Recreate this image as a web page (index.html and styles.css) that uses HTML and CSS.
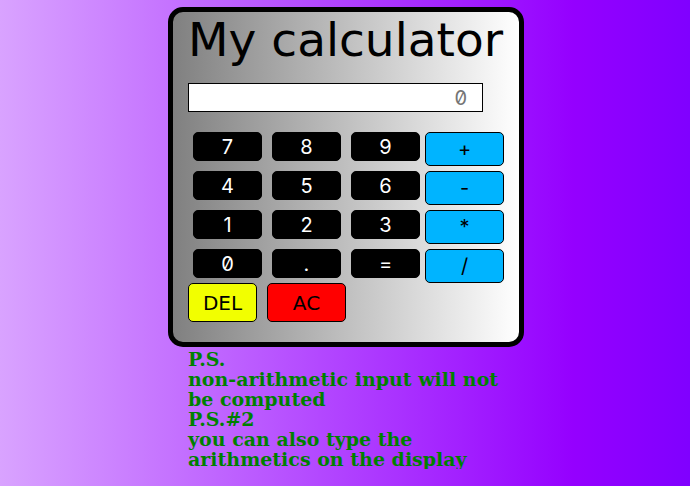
FILE: index.html
```
<!DOCTYPE html>
<html lang="en">
<head>
<meta charset="utf-8">
<title>My calculator</title>
<link rel="stylesheet" href="styles.css">
</head>
<body>
<main class="page">
  <section class="calculator">
    <h1 class="title">My calculator</h1>
    <input class="display" type="text" placeholder="0" aria-label="Display">
    <div class="keypad">
      <button class="key" type="button">7</button>
      <button class="key" type="button">8</button>
      <button class="key" type="button">9</button>
      <button class="key operator" type="button">+</button>
      <button class="key" type="button">4</button>
      <button class="key" type="button">5</button>
      <button class="key" type="button">6</button>
      <button class="key operator" type="button">-</button>
      <button class="key" type="button">1</button>
      <button class="key" type="button">2</button>
      <button class="key" type="button">3</button>
      <button class="key operator" type="button">*</button>
      <button class="key" type="button">0</button>
      <button class="key" type="button">.</button>
      <button class="key" type="button">=</button>
      <button class="key operator" type="button">/</button>
    </div>
    <div class="actions">
      <button class="key delete" type="button">DEL</button>
      <button class="key clear" type="button">AC</button>
    </div>
  </section>
  <p class="notes">P.S.<br>non-arithmetic input will not be computed<br>P.S.#2<br>you can also type the arithmetics on the display</p>
</main>
</body>
</html>
```
FILE: styles.css
```
* {
  box-sizing: border-box;
}

html {
  min-height: 100%;
  background: linear-gradient(to right, #d9a3ff, #9500ff 83%, #8000ff);
}

body {
  margin: 0;
  padding: 7px 0 0 2px;
}

.page {
  max-width: 356px;
  margin: 0 auto;
}

.calculator {
  padding: 12px 15px 20px;
  border: 5px solid #000;
  border-radius: 15px;
  background: linear-gradient(to right, #808080, #fff);
  font-family: Inter, "DejaVu Sans", sans-serif;
}

.title {
  margin: 0 0 27px;
  font-family: "DejaVu Sans", sans-serif;
  font-size: 47px;
  font-weight: 400;
  line-height: 32px;
  white-space: nowrap;
}

.display {
  display: block;
  width: 295px;
  max-width: 100%;
  height: 29px;
  margin: 0 0 20px;
  padding: 0 15px;
  border: 1px solid #000;
  background: #fff;
  font: 20px Inter, "DejaVu Sans", sans-serif;
  font-feature-settings: "zero";
  text-align: right;
}

.display::placeholder {
  color: #757575;
}

.keypad {
  display: grid;
  grid-template-columns: repeat(4, 1fr);
  row-gap: 5px;
}

.key {
  height: 29px;
  margin: 0 5px;
  padding: 0;
  border: 1px solid #000;
  border-radius: 5px;
  background: #000;
  color: #fff;
  font: 20px Inter, "DejaVu Sans", sans-serif;
  font-feature-settings: "zero";
}

.operator {
  height: 34px;
  margin: 0;
  background: #00b4ff;
  color: #000;
}

.actions {
  display: grid;
  grid-template-columns: repeat(4, 1fr);
}

.delete,
.clear {
  height: 39px;
  margin: 0;
  color: #000;
  font-family: "DejaVu Sans", sans-serif;
}

.delete {
  margin-right: 10px;
  background: #f2ff00;
}

.clear {
  background: #f00;
}

.notes {
  margin: 2px 14px 0 20px;
  color: #008000;
  font: bold 19px/20px "DejaVu Serif", serif;
}
```
